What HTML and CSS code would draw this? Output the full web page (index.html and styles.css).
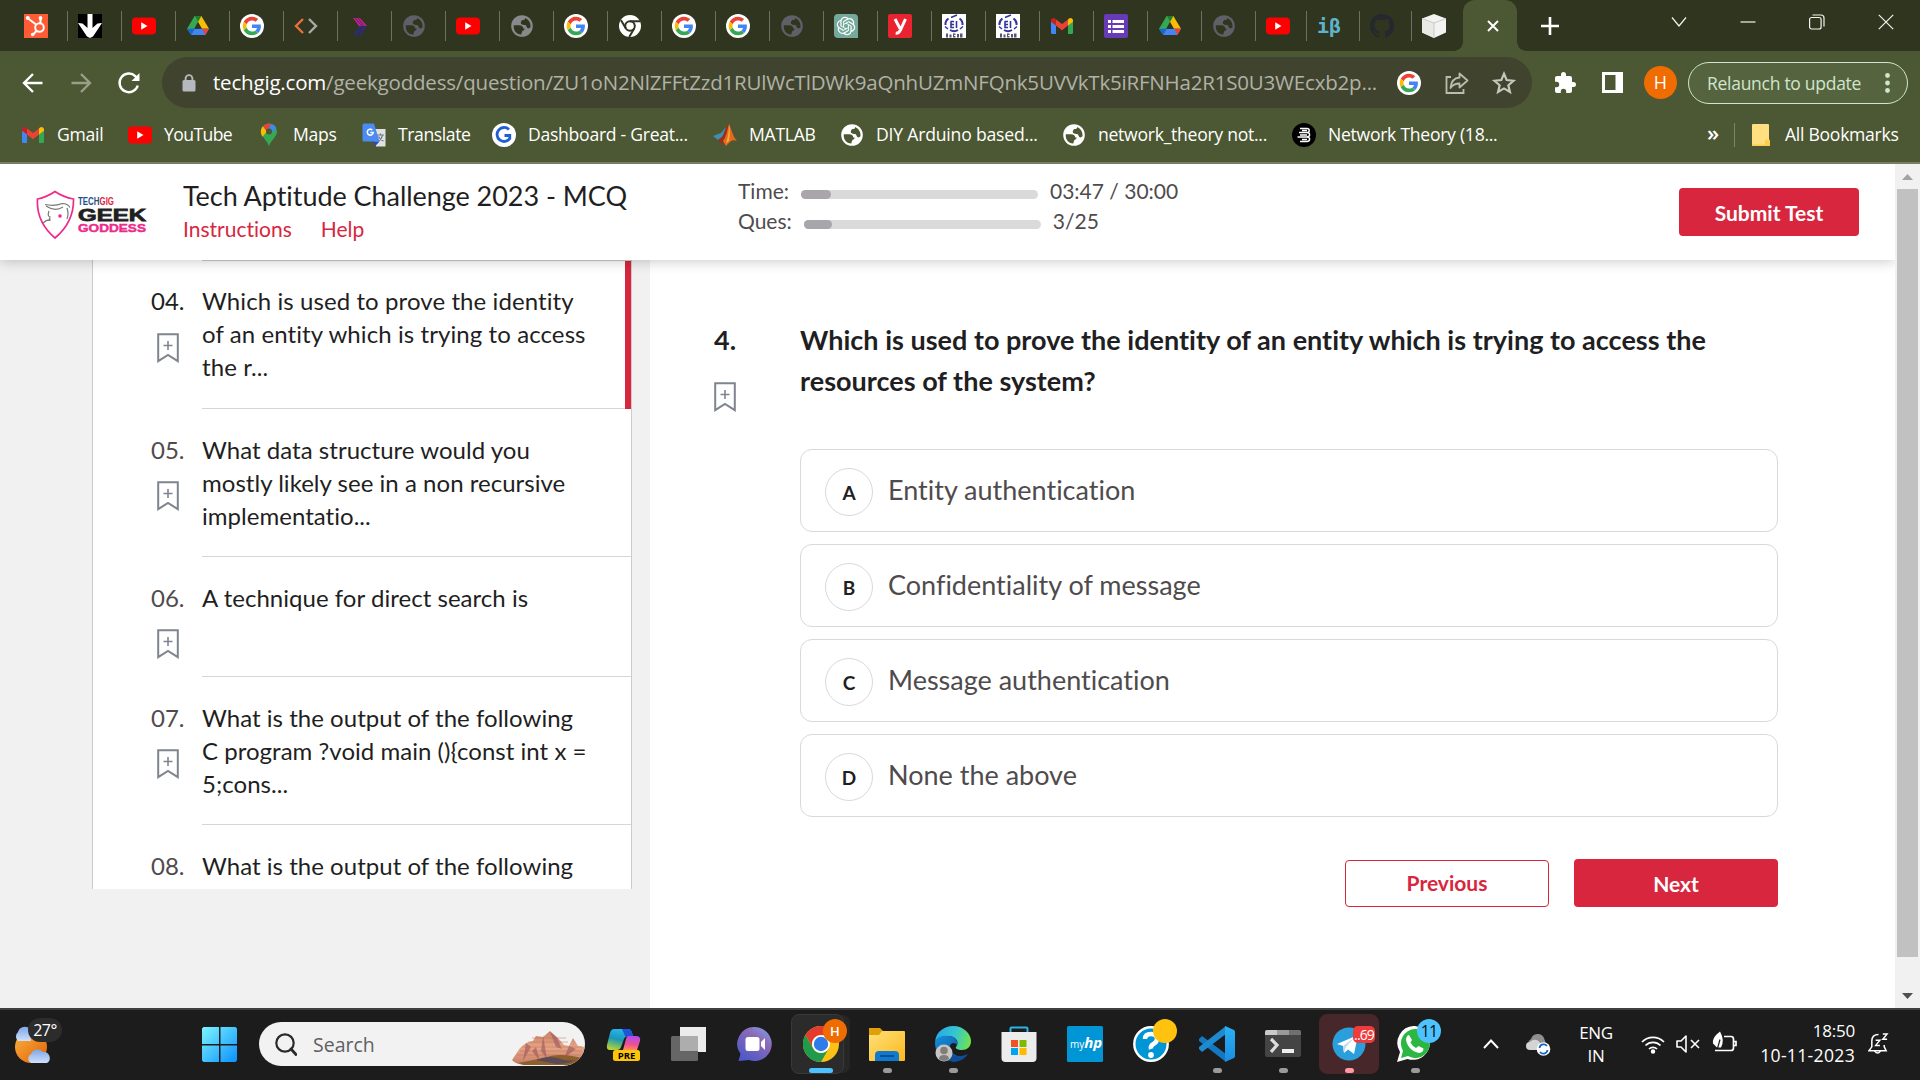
FILE: index.html
```html
<!DOCTYPE html>
<html lang="en">
<head>
<meta charset="utf-8">
<title>Tech Aptitude Challenge 2023 - MCQ</title>
<link rel="stylesheet" href="styles.css">
</head>
<body>
<svg class="defs" width="0" height="0">
  <defs>
    <linearGradient id="gWin" x1="0" y1="0" x2="1" y2="1"><stop offset="0" stop-color="#7df5ff"/><stop offset="1" stop-color="#0a90ff"/></linearGradient>
    <linearGradient id="gCopA" x1="0.6" y1="0" x2="0.3" y2="1"><stop offset="0" stop-color="#28b9f2"/><stop offset=".5" stop-color="#1c97b8"/><stop offset="1" stop-color="#b6d432"/></linearGradient>
    <linearGradient id="gCopB" x1=".5" y1="0" x2=".4" y2="1"><stop offset="0" stop-color="#b04bf0"/><stop offset=".6" stop-color="#ee5191"/><stop offset="1" stop-color="#ff8a5c"/></linearGradient>
    <linearGradient id="gChat" x1="1" y1="0" x2=".3" y2="1"><stop offset="0" stop-color="#7fa8f5"/><stop offset=".4" stop-color="#8b6ab5"/><stop offset="1" stop-color="#5059c9"/></linearGradient>
    <linearGradient id="gFold" x1="0" y1="0" x2="1" y2="1"><stop offset="0" stop-color="#ffe07a"/><stop offset="1" stop-color="#fcb91c"/></linearGradient>
    <linearGradient id="gEdge" x1="0" y1=".3" x2="1" y2=".5"><stop offset="0" stop-color="#2aa7e8"/><stop offset=".55" stop-color="#35c6d0"/><stop offset="1" stop-color="#6fe34e"/></linearGradient>
    <linearGradient id="gEdgeB" x1="0" y1="0" x2="1" y2="1"><stop offset="0" stop-color="#1390dd"/><stop offset="1" stop-color="#0e4f99"/></linearGradient>
    <linearGradient id="gCode" x1="0" y1="0" x2="0" y2="1"><stop offset="0" stop-color="#2bb0f5"/><stop offset="1" stop-color="#1b8ce0"/></linearGradient>
    <linearGradient id="gRock" x1="0" y1="0" x2="0" y2="1"><stop offset="0" stop-color="#c9826a"/><stop offset=".5" stop-color="#e8a584"/><stop offset="1" stop-color="#c47d66"/></linearGradient>
    <linearGradient id="gSun" x1="0" y1="0" x2="1" y2="1"><stop offset="0" stop-color="#fbb33a"/><stop offset="1" stop-color="#e0600b"/></linearGradient>
    <linearGradient id="gCloud" x1="0" y1="0" x2="0" y2="1"><stop offset="0" stop-color="#7ea6e8"/><stop offset="1" stop-color="#cfe0fb"/></linearGradient>

    <symbol id="google" viewBox="0 0 24 24"><circle cx="12" cy="12" r="12" fill="#fff"/><g transform="translate(2.7 2.7) scale(.3875)"><path fill="#EA4335" d="M24 9.5c3.54 0 6.71 1.22 9.21 3.6l6.85-6.85C35.9 2.38 30.47 0 24 0 14.62 0 6.51 5.38 2.56 13.22l7.98 6.19C12.43 13.72 17.74 9.5 24 9.5z"/><path fill="#4285F4" d="M46.98 24.55c0-1.57-.15-3.09-.38-4.55H24v9.02h12.94c-.58 2.96-2.26 5.48-4.78 7.18l7.73 6c4.51-4.18 7.09-10.36 7.09-17.65z"/><path fill="#FBBC05" d="M10.53 28.59c-.48-1.45-.76-2.99-.76-4.59s.27-3.14.76-4.59l-7.98-6.19C.92 16.46 0 20.12 0 24c0 3.88.92 7.54 2.56 10.78l7.97-6.19z"/><path fill="#34A853" d="M24 48c6.48 0 11.93-2.13 15.89-5.81l-7.73-6c-2.15 1.45-4.92 2.3-8.16 2.3-6.26 0-11.57-4.22-13.47-9.91l-7.98 6.19C6.51 42.62 14.62 48 24 48z"/></g></symbol>
    <symbol id="youtube" viewBox="0 0 24 24"><rect y="3.6" width="24" height="16.8" rx="4" fill="#f00"/><path d="M9.2 8.2v7.6l6.3-3.8z" fill="#fff"/></symbol>
    <symbol id="drive" viewBox="0 0 24 24"><path d="M8.6 2h6.800l-3.400 6-6.900 12.600L1 14.800z" fill="#34a853"/><path d="M8.600 2h6.800l7.600 12.800h-7z" fill="#fbbc04"/><path d="M8.500 14.800H23L19.300 21H5z" fill="#4285f4"/><path d="M16 14.800h7L19.300 21z" fill="#ea4335"/><path d="M8.600 2h6.800L12 8z" fill="#188038"/><path d="M1 14.800h7.500L5 21z" fill="#1967d2"/><path d="M12 8.600l3.400 6.200H8.600z" fill="#30351f"/></symbol>
    <symbol id="gmail" viewBox="0 0 24 24"><path d="M1 6v12.500A1.500 1.500 0 0 0 2.500 20H6v-9z" fill="#4285f4"/><path d="M23 6v12.500a1.500 1.500 0 0 1-1.500 1.500H18v-9z" fill="#34a853"/><path d="M6 5.500l6 4.600 6-4.600V11.500l-6 4.700-6-4.700z" fill="#ea4335"/><path d="M1 6.500C1 4 3.500 3.200 5 4.500l1 1v6L1 7.700z" fill="#c5221f"/><path d="M23 6.500c0-2.500-2.500-3.300-4-2l-1 1v6l5-3.800z" fill="#fbbc04"/></symbol>
    <symbol id="globe" viewBox="0 0 24 24"><path fill="currentColor" fill-rule="evenodd" d="M12 1.200a10.800 10.800 0 1 0 0 21.600 10.800 10.800 0 0 0 0-21.600zM3.800 11.200l5.400.1c2.600.2 4 1.200 4 3.200h1.500c-.3 2.400-2.300 2-2.700 3.300l-.7 2.700C6.200 20.600 3.200 16 3.800 11.200zM15 3.900c3.800 1.600 6 5.200 5.500 9.400-1.800 2-3.600 1-4-.8-.3-1.800-1.900-1.500-3.500-1.800-2.600-.5-2.700-2.300-1.300-4.200.8-1 2.800-.3 3.300-1.600z"/></symbol>
    <symbol id="mark" viewBox="0 0 22 30"><path d="M1.200 1.200h19.600v27l-9.800-6.200-9.800 6.200z" fill="none" stroke="#7f858f" stroke-width="2"/><path d="M11 8v9M6.500 12.500h9" stroke="#7f858f" stroke-width="1.600"/></symbol>
    <symbol id="seal" viewBox="0 0 24 24"><path fill="#fff" d="M0 0h24v24H0z"/><g fill="none" stroke="#34349a"><path d="M6.500 4.500Q3 7 3.500 11M17.500 4.500Q21 7 20.500 11M8 16q4 2.500 8 0" stroke-width="2"/><path d="M3 12.500l3 2.500M21 12.500L18 15M9 3.500l6-2.500" stroke-width="1.500"/><path d="M8.500 7.500H12M9 7.500v6h3M9 10.500h3M14.500 7v7" stroke-width="1.600"/></g><path d="M4 19.500h2v4H4zM7.500 20.500h2v3h-2zM11 19.500h2.500v1.500H12v1h1.500v1.500H11zM15 20h2v3.500h-2zM18 19.500h2.500v4H18z" fill="#55557c"/></symbol>
  </defs>
</svg>

<div class="screen">
  <div class="tabstrip">
    <div class="tab"><svg viewBox="0 0 24 24"><path fill="#ff5c35" d="M0 0h24v24H0z"/><g fill="none" stroke="#fff" stroke-width="2"><circle cx="15.500" cy="13.500" r="4.300"/><path d="M3.500 4l8.500 6.500M16.500 9V5M12.500 17L9 20.500"/></g><g fill="#fff"><circle cx="3.800" cy="4" r="2"/><circle cx="16.500" cy="4" r="1.900"/><circle cx="8.700" cy="20.500" r="1.800"/></g></svg></div>
    <div class="tab"><svg viewBox="0 0 24 24"><path d="M0 0h24v24H0z"/><path d="M9.500 0h5v14l5-4.500 4.500-.500-9 13.500-3 1.500-3-1.500L0 9l4.500.500 5 4.500z" fill="#fff"/></svg></div>
    <div class="tab"><svg><use href="#youtube"/></svg></div>
    <div class="tab"><svg><use href="#drive"/></svg></div>
    <div class="tab"><svg><use href="#google"/></svg></div>
    <div class="tab"><svg viewBox="0 0 24 24" fill="none" stroke-width="2.400"><path d="M9 5l-7 7 7 7" stroke="#e8703c"/><path d="M15 5l7 7-7 7" stroke="#a9a9a9"/></svg></div>
    <div class="tab"><svg viewBox="0 0 24 24"><path d="M5 4h7l7 8h-8z" fill="#c6218c"/><path d="M11 12h8l-6 9H5z" fill="#2b2f6e"/><path d="M7 4l7 8-6 9M10 4l6 8-6 9" stroke="#3a2550" fill="none" stroke-width=".8"/></svg></div>
    <div class="tab dim"><svg><use href="#globe"/></svg></div>
    <div class="tab"><svg><use href="#youtube"/></svg></div>
    <div class="tab mid"><svg><use href="#globe"/></svg></div>
    <div class="tab"><svg><use href="#google"/></svg></div>
    <div class="tab"><svg viewBox="0 0 24 24"><circle cx="12" cy="12" r="11" fill="#fff"/><g fill="none" stroke="#30351f" stroke-width="2"><circle cx="12" cy="12" r="4.800"/><path d="M12 7.200h10M7.900 14.500L3 6.200M16.200 14.500l-5 8.500"/></g></svg></div>
    <div class="tab"><svg><use href="#google"/></svg></div>
    <div class="tab"><svg><use href="#google"/></svg></div>
    <div class="tab dim"><svg><use href="#globe"/></svg></div>
    <div class="tab"><svg viewBox="0 0 24 24"><path d="M4 0h16a4 4 0 0 1 4 4v20H4a4 4 0 0 1-4-4V4a4 4 0 0 1 4-4z" fill="#75a99c"/><path transform="translate(2.700 2.700) scale(.775)" fill="#fff" d="M22.282 9.821a5.985 5.985 0 0 0-.516-4.910 6.046 6.046 0 0 0-6.510-2.900A6.065 6.065 0 0 0 4.981 4.182a5.985 5.985 0 0 0-3.998 2.900 6.046 6.046 0 0 0 .743 7.097 5.980 5.980 0 0 0 .511 4.911 6.051 6.051 0 0 0 6.515 2.900A5.985 5.985 0 0 0 13.260 24a6.056 6.056 0 0 0 5.772-4.206 5.990 5.990 0 0 0 3.998-2.900 6.056 6.056 0 0 0-.748-7.073zm-9.022 12.608a4.476 4.476 0 0 1-2.876-1.041l.142-.080 4.778-2.758a.795.795 0 0 0 .393-.681v-6.737l2.020 1.169a.071.071 0 0 1 .038.052v5.583a4.504 4.504 0 0 1-4.495 4.494zm-9.661-4.125a4.471 4.471 0 0 1-.535-3.014l.142.085 4.783 2.758a.771.771 0 0 0 .781 0l5.843-3.369v2.332a.080.080 0 0 1-.033.062L9.740 19.950a4.499 4.499 0 0 1-6.141-1.646zM2.341 7.896a4.485 4.485 0 0 1 2.366-1.973V11.600a.766.766 0 0 0 .388.677l5.814 3.354-2.020 1.169a.076.076 0 0 1-.071 0l-4.830-2.787A4.504 4.504 0 0 1 2.341 7.872zm16.596 3.856L13.104 8.364 15.119 7.200a.076.076 0 0 1 .071 0l4.830 2.791a4.494 4.494 0 0 1-.677 8.104v-5.677a.790.790 0 0 0-.407-.667zm2.011-3.023l-.142-.085-4.774-2.782a.776.776 0 0 0-.785 0L9.409 9.230V6.897a.066.066 0 0 1 .028-.062l4.830-2.787a4.499 4.499 0 0 1 6.680 4.660zM8.307 12.863l-2.020-1.164a.080.080 0 0 1-.038-.057V6.074a4.499 4.499 0 0 1 7.376-3.454l-.142.081L8.704 5.459a.795.795 0 0 0-.393.681zm1.098-2.365l2.602-1.500 2.607 1.500v2.999l-2.597 1.500-2.607-1.500z"/></svg></div>
    <div class="tab"><svg viewBox="0 0 24 24"><rect width="24" height="24" rx="2" fill="#ea2330"/><path d="M7 5l5 9.500M17.500 5l-5 11c-1 2.300-2.300 3.500-4.800 3.300" fill="none" stroke="#fff" stroke-width="3"/></svg></div>
    <div class="tab"><svg><use href="#seal"/></svg></div>
    <div class="tab"><svg><use href="#seal"/></svg></div>
    <div class="tab"><svg><use href="#gmail"/></svg></div>
    <div class="tab"><svg viewBox="0 0 24 24"><rect width="24" height="24" rx="2" fill="#673ab7"/><path d="M8.500 6H20v3H8.500zM8.500 11H20v3H8.500zM8.500 16H20v3H8.500zM4 6h3v3H4zM4 11h3v3H4zM4 16h3v3H4z" fill="#fff"/></svg></div>
    <div class="tab"><svg><use href="#drive"/></svg></div>
    <div class="tab dim"><svg><use href="#globe"/></svg></div>
    <div class="tab tab-51"><svg><use href="#youtube"/></svg></div>
    <div class="tab tab-53"><span class="ib">iβ</span></div>
    <div class="tab tab-52"><svg viewBox="0 0 16 16" fill="#24292f"><path d="M8 0C3.580 0 0 3.580 0 8c0 3.540 2.290 6.530 5.470 7.590.4.070.55-.17.55-.38v-1.340c-2.230.48-2.700-1.070-2.700-1.070-.36-.93-.89-1.170-.89-1.170-.73-.5.06-.49.06-.49.8.06 1.230.83 1.230.83.71 1.230 1.880.87 2.330.67.070-.52.280-.87.5-1.070-1.780-.2-3.640-.89-3.640-3.950 0-.87.310-1.590.82-2.150-.08-.2-.36-1.020.08-2.120 0 0 .67-.21 2.200.82a7.600 7.600 0 0 1 4 0c1.530-1.040 2.200-.82 2.200-.82.44 1.100.16 1.920.08 2.120.51.56.82 1.270.82 2.150 0 3.070-1.870 3.750-3.650 3.950.29.25.54.73.54 1.480v2.200c0 .21.150.46.55.38A8 8 0 0 0 8 0z"/></svg></div>
    <div class="tab tab-51 last"><svg viewBox="0 0 24 24"><path d="M12 0l12 4.500v14L12 24 0 18.500v-14z" fill="#f3f3f1"/><path d="M12 9v15L0 18.500v-14z" fill="#e9e9e6"/><path d="M0 4.500L12 9l12-4.500M12 9v15" stroke="#c9c9c5" fill="none"/></svg></div>
    <div class="tab-active"><svg viewBox="0 0 12 12"><path d="M1 1l10 10M11 1L1 11" stroke="#fff" stroke-width="2"/></svg></div>
    <svg class="plus" viewBox="0 0 18 18"><path d="M9 0v18M0 9h18" stroke="#fff" stroke-width="2.600"/></svg>
    <div class="winctl">
      <svg viewBox="0 0 16 16"><path d="M1 3.500L8 12l7-8.500"/></svg>
      <svg viewBox="0 0 16 16"><path d="M.5 8h15"/></svg>
      <svg viewBox="0 0 16 16"><rect x=".6" y="3.500" width="11.500" height="11.500" rx="2"/><path d="M3.500 1h8.500a3 3 0 0 1 3 3v8.500"/></svg>
      <svg viewBox="0 0 16 16"><path d="M.8.8l14.400 14.400M15.200.8L.8 15.200"/></svg>
    </div>
  </div>

  <div class="toolbar">
    <svg class="nav" viewBox="0 0 24 24"><path d="M21.500 12H3.500M12 3l-9 9 9 9"/></svg>
    <svg class="nav off" viewBox="0 0 24 24"><path d="M2.500 12h18M12 3l9 9-9 9"/></svg>
    <svg class="nav" viewBox="0 0 24 24"><path d="M20.800 14.500A9.300 9.300 0 1 1 18.500 5.300L21 8"/><path d="M22.500 2v8h-8z" fill="#fff" stroke="none"/></svg>
    <div class="omnibox">
      <svg class="lock" viewBox="0 0 14 18"><rect x=".5" y="6" width="13" height="11.500" rx="1.500" fill="#b5b8bd"/><path d="M3.600 7V4.500a3.400 3.400 0 0 1 6.800 0V7" fill="none" stroke="#b5b8bd" stroke-width="1.900"/></svg>
      <span class="url"><b>techgig.com</b>/geekgoddess/question/ZU1oN2NlZFFtZzd1RUlWcTlDWk9aQnhUZmNFQnk5UVVkTk5iRFNHa2R1S0U3WEcxb2p...</span>
      <svg class="gicon"><use href="#google"/></svg>
      <svg class="share" viewBox="0 0 24 24" fill="none" stroke="#b9bcae" stroke-width="1.800"><path d="M6 6H1.500v16h17v-4"/><path d="M14.500 2.500l8 7-8 7v-4c-4.500 0-7 1.500-9 4.500.5-6 3.500-10 9-10.500z" stroke-linejoin="round"/></svg>
      <svg class="star" viewBox="0 0 24 24" fill="none" stroke="#c6c8bd" stroke-width="2"><path d="M12 3.500l2.500 5.800 6.300.6-4.800 4.200 1.500 6.200-5.500-3.300-5.500 3.300L8 14.100 3.200 9.900l6.300-.6z"/></svg>
    </div>
    <svg class="puzzle" viewBox="0 0 24 24"><path fill="#fff" d="M20.500 11H19V7c0-1.100-.9-2-2-2h-4V3.500a2.500 2.500 0 0 0-5 0V5H4c-1.100 0-2 .9-2 2v3.800h1.500a2.700 2.700 0 0 1 0 5.400H2V20c0 1.100.9 2 2 2h3.800v-1.500a2.700 2.700 0 0 1 5.400 0V22H17c1.100 0 2-.9 2-2v-4h1.500a2.500 2.500 0 0 0 0-5z"/></svg>
    <svg class="panel" viewBox="0 0 21 21"><path fill="#fff" fill-rule="evenodd" d="M0 0h21v21H0zM3 3v15h10.500V3z"/></svg>
    <div class="avatar">H</div>
    <div class="relaunch"><span>Relaunch to update</span><svg viewBox="0 0 5 20" fill="#cfe6cd"><circle cx="2.500" cy="2.500" r="2.400"/><circle cx="2.500" cy="10" r="2.400"/><circle cx="2.500" cy="17.500" r="2.400"/></svg></div>
  </div>

  <div class="bookmarks">
    <div class="bm w1"><svg><use href="#gmail"/></svg><span>Gmail</span></div>
    <div class="bm w2"><svg><use href="#youtube"/></svg><span>YouTube</span></div>
    <div class="bm w3"><svg viewBox="0 0 24 24"><path d="M12 .5a8 8 0 0 0-8 8c0 5.500 6 8 8 15 2-7 8-9.500 8-15a8 8 0 0 0-8-8z" fill="#34a853"/><path d="M6 3.200l4 5.300-4.500 5.200C3 10 3.500 6 6 3.200z" fill="#fbbc04"/><path d="M6 3.200A8 8 0 0 1 14.500.9L9.500 8z" fill="#ea4335"/><path d="M14.500.9A8 8 0 0 1 19.200 5L14 10.500 10 8z" fill="#4285f4"/><circle cx="12" cy="8.500" r="3" fill="#4c5733"/></svg><span>Maps</span></div>
    <div class="bm w4"><svg viewBox="0 0 24 24"><path d="M9 6h14.500v17.500H14z" fill="#dfe1e3"/><path d="M2 .5h10l5.500 18H2A1.500 1.500 0 0 1 .5 17V2A1.500 1.500 0 0 1 2 .5z" fill="#4b8bf4"/><path d="M11.500 18.500h6l-4.300 4.700z" fill="#2a48b8"/><path d="M8.300 9.500h3a3 3 0 1 1-1-2.600" fill="none" stroke="#fff" stroke-width="1.500"/><path d="M15 12h7M18.500 10.500V12M20.500 12c-.5 3-2 4.800-4 6M16.500 13.500c1 2 2.500 3.500 5 4.500" fill="none" stroke="#6c7a89" stroke-width="1.200"/></svg><span>Translate</span></div>
    <div class="bm w5"><svg viewBox="0 0 24 24"><circle cx="12" cy="12" r="12" fill="#fff"/><path d="M17 6.500a7 7 0 1 0 .8 9V12.500H12.500" fill="none" stroke="#1f5fd0" stroke-width="2.800"/></svg><span>Dashboard - Great...</span></div>
    <div class="bm w6"><svg viewBox="0 0 24 24"><path d="M0 13l8-3 5-6-3 9-5 4z" fill="#3f8fae"/><path d="M5 17l4-2c2-4 4-11 7-14-1 8-3 14-7 20z" fill="#a3291a"/><path d="M16 1c2 4 4 13 8 17-5-2-6 0-11 5l-3-5c3-4 4-10 6-17z" fill="#e66a1c"/><path d="M16 1c1 5 1 10 0 17l-3 2c2-5 3-12 3-19z" fill="#f9b13c"/></svg><span>MATLAB</span></div>
    <div class="bm w7"><svg><use href="#globe"/></svg><span>DIY Arduino based...</span></div>
    <div class="bm w8"><svg><use href="#globe"/></svg><span>network_theory not...</span></div>
    <div class="bm w9"><svg viewBox="0 0 24 24"><circle cx="12" cy="12" r="12"/><path d="M8 5.500h7c3 0 3 4 0 4H7M15 9.500c4 .5 3 4.500 0 4.500H5.500M15 14c4 .5 3 4.500 0 4.500H8M10 7.500h5M8 12h7M10 16.500h5" fill="none" stroke="#fff" stroke-width="1.400"/></svg><span>Network Theory (18...</span></div>
    <div class="more">»</div>
    <div class="vsep"></div>
    <svg class="folder" viewBox="0 0 18 22"><path d="M1 0h15a1 1 0 0 1 1 1v14l1 2v4a1 1 0 0 1-1 1H1a1 1 0 0 1-1-1V1a1 1 0 0 1 1-1z" fill="#ffdf80"/><path d="M0 20.500h13V16q2-1.500 5 1v5H0z" fill="#fbcf4c"/></svg>
    <span class="all">All Bookmarks</span>
  </div>

  <div class="page">
    <div class="doc">
      <header class="head">
        <svg class="logo" viewBox="0 0 112 50">
          <path d="M1.500 9Q11 7 19 1.500 27 7 37.500 9 38 32 19 48 0 32 1.500 9z" fill="#fff" stroke="#ee2a8b" stroke-width="1.700"/>
          <path d="M9 14.500q10 2 17-1 6 0 8 4M10 16q9 6 17 1M13 21q-2 5 1 6l-1 4M7 33q4-4 8-3M31 18q2 6 0 11" fill="none" stroke="#777" stroke-width="1.200"/><circle cx="24" cy="26" r="1.800" fill="#ee2a8b"/>
          <text x="42" y="14.500" class="lg1" textLength="36" lengthAdjust="spacingAndGlyphs" fill="#234f8f">TECH<tspan fill="#e3263a">GIG</tspan></text>
          <text x="42" y="31" class="lg2" textLength="68" lengthAdjust="spacingAndGlyphs">GEEK</text>
          <text x="42" y="42" class="lg3" textLength="68" lengthAdjust="spacingAndGlyphs">GODDESS</text>
        </svg>
        <div class="titles"><h1>Tech Aptitude Challenge 2023 - MCQ</h1><nav><a>Instructions</a><a>Help</a></nav></div>
        <div class="meters">
          <div class="meter"><span>Time:</span><i class="bar b1"><em></em></i><span>03:47 / 30:00</span></div>
          <div class="meter"><span>Ques:</span><i class="bar b2"><em></em></i><span>3/25</span></div>
        </div>
        <button class="btn submit">Submit Test</button>
      </header>
      <div class="body">
        <aside class="list">
          <div class="q current"><div class="no"><span>04.</span><svg><use href="#mark"/></svg></div><p>Which is used to prove the identity<br>of an entity which is trying to access<br>the r...</p></div>
          <div class="q"><div class="no"><span>05.</span><svg><use href="#mark"/></svg></div><p>What data structure would you<br>mostly likely see in a non recursive<br>implementatio...</p></div>
          <div class="q"><div class="no"><span>06.</span><svg><use href="#mark"/></svg></div><p>A technique for direct search is</p></div>
          <div class="q"><div class="no"><span>07.</span><svg><use href="#mark"/></svg></div><p>What is the output of the following<br>C program ?void main (){const int x =<br>5;cons...</p></div>
          <div class="q"><div class="no"><span>08.</span></div><p>What is the output of the following</p></div>
        </aside>
        <main class="main">
          <div class="qnum"><span>4.</span><svg><use href="#mark"/></svg></div>
          <div class="qbody">
            <h2>Which is used to prove the identity of an entity which is trying to access the<br>resources of the system?</h2>
            <div class="opts">
              <div class="opt"><b>A</b><span>Entity authentication</span></div>
              <div class="opt"><b>B</b><span>Confidentiality of message</span></div>
              <div class="opt"><b>C</b><span>Message authentication</span></div>
              <div class="opt"><b>D</b><span>None the above</span></div>
            </div>
            <div class="actions"><button class="btn prev">Previous</button><button class="btn next">Next</button></div>
          </div>
        </main>
      </div>
    </div>
    <div class="scroll"><svg class="up" viewBox="0 0 11 6"><path d="M0 6L5.500 0 11 6z" fill="#a3a3a3"/></svg><div class="thumb"></div><svg class="down" viewBox="0 0 11 6"><path d="M0 0l5.500 6L11 0z" fill="#505050"/></svg></div>
  </div>

  <div class="taskbar">
    <div class="weather"><svg viewBox="0 0 40 42"><circle cx="19" cy="24" r="16" fill="url(#gSun)"/><path d="M6 18a6 6 0 0 1 0-9 7 7 0 0 1 12-3l1 12z" fill="url(#gCloud)"/><path d="M19 40a5 5 0 0 1 0-9 7 7 0 0 1 12-2 6 6 0 0 1 4 11z" fill="url(#gCloud)"/></svg><span>27°</span></div>
    <svg class="start" viewBox="0 0 35 35"><path fill="url(#gWin)" d="M1.500 0H17v17H0V1.500zM18.500 0h15L35 1.500V17H18.500zM0 18.500h17V35H1.500L0 33.500zM18.500 18.500H35v15L33.500 35h-15z"/></svg>
    <div class="search"><svg class="mag" viewBox="0 0 22 23" fill="none" stroke="#2a2a2a"><circle cx="10" cy="10" r="8.700" stroke-width="2.200"/><path d="M16 16l5 5.500" stroke-width="2.800" stroke-linecap="round"/></svg><span>Search</span>
      <svg class="rock" viewBox="0 0 73 34"><path d="M0 29L8 17l6-5 7-2 3-5 7 1 7-6 8 7 6 7 5 1 4-8 5 8 7 1-1 6q-4 8-14 12H12Q3 33 0 29z" fill="url(#gRock)"/><path d="M14 12l-3 18 8-14zM31 6l-2 14 6 8-4-24zM38 1l6 15 6 2-5-11zM24 16l4 14-8-10zM57 15l-5 12 12-9z" fill="#8c4f5c" opacity=".55"/><path d="M20 7h34M16 11h40M10 16h60M8 20h62M5 24h64" stroke="#b96a5c" stroke-width=".8" opacity=".6"/><path d="M6 32q20-4 26-5 14-6 38 0-5 5-14 7H12z" fill="#8d5f2c"/><path d="M24 29q14-6 28 0 8 1 12 0-8 4-20 4z" fill="#5b4a55"/></svg></div>
    <div class="apps">
      <div class="app"><svg viewBox="0 0 36 36"><path d="M9 3h14q3 0 4 4l1 3h-5q-3 0-4 3l-3 8q-1 3-4 3H5q-4 0-3-5L5 7q1-4 4-4z" fill="url(#gCopA)"/><path d="M17 3h6q3 0 4 4l1 3h-8z" fill="#1f55d8"/><path d="M23 10h8q5 0 4 5l-3 9H18l3-11q.500-3 2-3z" fill="url(#gCopB)"/><rect x="8" y="24" width="27" height="11" rx="2.500" fill="#fec40a"/><text x="21.500" y="33" class="pre" text-anchor="middle">PRE</text></svg></div>
      <div class="app"><svg viewBox="0 0 36 36"><path d="M9 1h26v25H9z" fill="#ececec"/><rect y="10" width="27" height="25" rx="1.500" fill="#666"/><path d="M9 10h18v15H9z" fill="#adadad"/></svg></div>
      <div class="app"><svg viewBox="0 0 36 36"><path d="M18 1a17 17 0 1 1-6 33l-10.500 1 2-7A17 17 0 0 1 18 1z" fill="url(#gChat)"/><rect x="8.500" y="11" width="14" height="14" rx="2.500" fill="#fff"/><path d="M24 16l4-4v12l-4-4z" fill="#fff"/></svg></div>
      <div class="app"><span class="tile"></span><svg viewBox="0 0 36 36"><circle cx="18" cy="18" r="18" fill="#fbc116"/><path d="M2.400 9A18 18 0 0 1 33.600 9H18a9 9 0 0 0-8.500 12z" fill="#e33b2e"/><path d="M2.400 9A18 18 0 0 0 18 36l7.800-13.500A9 9 0 0 1 10.200 22.500z" fill="#229a4c"/><circle cx="18" cy="18" r="9" fill="#fff"/><circle cx="18" cy="18" r="7.200" fill="#2f7bea"/></svg><span class="badge bh">H</span><span class="dot wide"></span></div>
      <div class="app"><svg viewBox="0 0 36 36"><path d="M0 2h11l4 4v6H0z" fill="#e0a008"/><path d="M13 5h22q1 0 1 1v28q0 1-1 1H1q-1 0-1-1V9h10z" fill="url(#gFold)"/><path d="M6 35V29q0-4 4-4h16q4 0 4 4v6z" fill="#0f7ad0"/><path d="M11 30h14" stroke="#0a4e93" stroke-width="2"/></svg><span class="dot"></span></div>
      <div class="app"><svg viewBox="0 0 36 36"><path d="M0 16C1 5 10 0 18 0c11 0 18 8 18 15 0 6-4 9-9 9-5 0-7-2-6-3 4-5 0-11-8-11C7 10 2 12 0 16z" fill="url(#gEdge)"/><path d="M0 16c2-5 8-7 13-6 7 0 10 5 9 9-1-2-4-3-6-1-5 6 4 14 14 12-4 4-9 6-14 5C5 35 0 26 0 16z" fill="url(#gEdgeB)"/><path d="M13 18c-2 8 5 15 17 11l3-1c-3 5-9 8-15 8-8-2-11-10-5-18z" fill="#0f4d98"/><circle cx="9" cy="27" r="8.500" fill="#c8c6c4"/><circle cx="9" cy="24.500" r="3.800" fill="#807d7a"/><path d="M4 33q0-4 5-4t5 4q-5 4-10 0z" fill="#807d7a"/></svg><span class="dot"></span></div>
      <div class="app"><svg viewBox="0 0 36 36"><path d="M9.500 8V2.500q0-1 1-1h15q1 0 1 1V8" fill="none" stroke="#28b3ea" stroke-width="2"/><path d="M.5 6h35v26q0 4-4 4h-27q-4 0-4-4z" fill="#ececec"/><path d="M10 14h7v7h-7z" fill="#f25022"/><path d="M18.500 14h7v7h-7z" fill="#7fba00"/><path d="M10 22h7v7h-7z" fill="#00a4ef"/><path d="M18.500 22h7v7h-7z" fill="#ffb900"/></svg></div>
      <div class="app"><svg viewBox="0 0 36 36"><rect width="36" height="36" rx="1.500" fill="#0096d6"/><text x="3" y="22" class="my">my<tspan class="hp">hp</tspan></text></svg></div>
      <div class="app"><svg viewBox="0 0 36 36"><circle cx="18" cy="18" r="16.700" fill="#0096d6" stroke="#fff" stroke-width="2.400"/><path d="M12 13q0-5 6-5t6 5q0 3-3.500 5T18 23" fill="none" stroke="#fff" stroke-width="4.500"/><circle cx="18" cy="29" r="2.900" fill="#fff"/></svg><span class="badge by"></span></div>
      <div class="app"><svg viewBox="0 0 36 36"><path d="M0 13l3-3 24 18v8L0 15z" fill="#1478c0"/><path d="M0 23l3 3L27 8V0L0 21z" fill="#1e8ad0"/><path d="M26 0l9 4q1 .5 1 2v24q0 1.500-1 2l-9 4z" fill="url(#gCode)"/></svg><span class="dot"></span></div>
      <div class="app"><svg viewBox="0 0 36 36"><rect y="4" width="36" height="27" rx="2" fill="#444"/><path d="M2 4h10v5H0V6q0-2 2-2z" fill="#c9c9c9"/><path d="M12 4h12v5H12z" fill="#9a9a9a"/><path d="M24 4h10q2 0 2 2v3H24z" fill="#707070"/><path d="M6 13l6 6-6 7" fill="none" stroke="#ddd" stroke-width="3.200"/><path d="M17 23h12v4H17z" fill="#eee"/></svg><span class="dot"></span></div>
      <div class="app"><span class="tile red"></span><svg viewBox="0 0 36 36"><circle cx="18" cy="18" r="16.500" fill="#2a9fdb"/><path d="M6 18L27 9l-4 19-6-4.500-4 3.500-1-7z" fill="#fff"/><path d="M12 20l11-8-8 9-2 6z" fill="#c1dcec"/></svg><span class="badge bt">..69</span><span class="dot pink"></span></div>
      <div class="app"><svg viewBox="0 0 36 36"><path d="M18 0a17 17 0 1 1-7.500 33L0 36l3-10A17 17 0 0 1 18 0z" fill="#fff"/><path d="M18 3a14.500 14.500 0 1 1-7 27l-7 2 2-7A14.500 14.500 0 0 1 18 3z" fill="#2cb742"/><path d="M12 9l3 5-1.500 2.500q2 4 5.500 5.500l2.500-2 5 2.500q0 4-4.500 4.500C15 26 9 19 9 13q1-4 3-4z" fill="#fff"/></svg><span class="badge bw">11</span><span class="dot"></span></div>
    </div>
    <div class="tray">
      <svg class="chev" viewBox="0 0 16 10"><path d="M1 9l7-7.500L15 9" fill="none" stroke="#fff" stroke-width="2"/></svg>
      <svg class="cloud" viewBox="0 0 25 22"><path d="M5 14a5 5 0 0 1 0-9A7 7 0 0 1 18 4l3 9z" fill="#8f8f8f"/><path d="M4 16a4 4 0 0 1 0-8 6 6 0 0 1 10 1l3 7z" fill="#d4d4d4"/><circle cx="17.500" cy="15" r="6.800" fill="#fff"/><path d="M13.500 14a4.200 4.200 0 0 1 7.500-2M21.500 16a4.200 4.200 0 0 1-7.500 2" fill="none" stroke="#1467c4" stroke-width="1.800"/></svg>
      <div class="lang"><span>ENG</span><span>IN</span></div>
      <svg class="wifi" viewBox="0 0 24 20" fill="none" stroke="#fff" stroke-width="1.700"><path d="M1 8a15.500 15.500 0 0 1 22 0M4.500 11.500a10.600 10.600 0 0 1 15 0M8 15a5.700 5.700 0 0 1 8 0"/><circle cx="12" cy="17.500" r="1.400" fill="#fff"/></svg>
      <svg class="mute" viewBox="0 0 24 20" fill="none" stroke="#fff" stroke-width="1.600"><path d="M1 7v6h4l5 5V2L5 7z" stroke-linejoin="round"/><path d="M15 6l8 8M23 6l-8 8"/></svg>
      <svg class="batt" viewBox="0 0 25 21" fill="none" stroke="#fff" stroke-width="1.700"><path d="M12 5h7q2.500 0 2.500 2.500v9q0 2.500-2.500 2.500H3M22 10h2v4h-2"/><path d="M8 0q-8 6-7 12l4 4h4q4-7-1-16z" fill="#fff" stroke="none"/><path d="M8 8L5.500 17" stroke="#1c1c1c" stroke-width="1.200"/></svg>
      <div class="clock"><span>18:50</span><span class="date">10-11-2023</span></div>
      <svg class="bell" viewBox="0 0 22 23" fill="none" stroke="#fff" stroke-width="1.600"><path d="M11 2q-7 0-7 7v6l-3 4h18l-2-4v-2M7 19.500q3 4 6 0"/><path d="M8 8h4.500L8 13.500h4.500M15.500 1.500H20l-4.500 5.500H20" stroke-width="1.500"/></svg>
    </div>
  </div>
</div>
</body>
</html>
```
FILE: styles.css
```css
* { box-sizing: border-box; }
body { margin: 0; overflow: hidden; font-family: Lato, sans-serif; font-variant-ligatures: none; }
.defs { position: absolute; }
.screen { width: 1920px; height: 1080px; display: flex; flex-direction: column; background: #fff; }
h1, h2, p { margin: 0; font-weight: 400; }

/* tab strip */
.tabstrip { height: 51px; flex: none; display: flex; padding-left: 14px; background: #30351f; align-items: center; }
.tab { width: 54px; height: 30px; flex: none; display: flex; align-items: center; padding-left: 10px; border-right: 1px solid #6d705f; }
.tab svg { width: 24px; height: 24px; }
.tab-51 { width: 51px; }
.tab-52 { width: 52px; }
.tab-53 { width: 53px; }
.tab.last { border: 0; }
.dim { color: #5d6066; }
.mid { color: #87898b; }
.ib { font: 700 20px/24px "DejaVu Sans Mono", monospace; color: #5fb3cc; }
.tab-active { width: 54px; height: 51px; flex: none; border-radius: 12px 12px 0 0; background: #4c5733; display: flex; align-items: center; justify-content: center; padding-left: 5px; position: relative; }
.tab-active::before, .tab-active::after { content: ""; position: absolute; bottom: 0; width: 9px; height: 9px; }
.tab-active::before { left: -9px; background: radial-gradient(circle at 0 0, transparent 8.5px, #4c5733 9px); }
.tab-active::after { right: -9px; background: radial-gradient(circle at 100% 0, transparent 8.5px, #4c5733 9px); }
.tab-active svg { width: 12px; height: 12px; }
.plus { width: 18px; height: 18px; margin-left: 24px; }
.winctl { margin-left: auto; display: flex; gap: 53px; padding: 0 26px 8px 0; }
.winctl svg { width: 16px; height: 16px; fill: none; stroke: #f4f4f0; stroke-width: 1.2; }

/* toolbar */
.toolbar { height: 61px; flex: none; background: #4c5733; display: flex; align-items: center; padding-left: 21px; padding-top: 2px; font-family: "Open Sans", sans-serif; }
.nav { width: 24px; height: 24px; margin-right: 24px; fill: none; stroke: #fff; stroke-width: 2.4; }
.nav.off { stroke: #999f89; }
.omnibox { width: 1370px; height: 51px; border-radius: 26px; background: #40442f; margin-left: -3px; display: flex; align-items: center; padding-left: 20px; flex: none; }
.lock { width: 14px; height: 18px; }
.url { width: 1178px; margin: -2px 0 0 17px; color: #b0b2a6; font-size: 20.5px; white-space: nowrap; letter-spacing: -.19px; }
.url b { font-weight: 400; color: #fff; }
.gicon { width: 24px; height: 24px; margin-left: 6px; }
.share { width: 24px; height: 24px; margin-left: 24px; }
.star { width: 26px; height: 26px; margin-left: 22px; }
.puzzle { width: 24px; height: 24px; margin-left: 21px; flex: none; }
.panel { width: 21px; height: 21px; margin-left: 25px; flex: none; }
.avatar { width: 33px; height: 33px; margin-left: 21px; border-radius: 50%; background: #ef6c00; color: #fff; font-size: 18px; line-height: 33px; text-align: center; flex: none; }
.relaunch { width: 220px; height: 42px; margin-left: 11px; flex: none; border: 1.5px solid #cfe6cd; border-radius: 21px; background: #56633f; color: #cfe6cd; display: flex; align-items: center; justify-content: space-between; padding: 0 17px 0 18px; font-size: 17.5px; letter-spacing: -.28px; white-space: nowrap; }
.relaunch svg { width: 5px; height: 20px; }

/* bookmarks */
.bookmarks { height: 52px; flex: none; background: #4c5733; border-bottom: 2px solid #7a7d64; display: flex; align-items: center; padding: 0 0 5px 21px; color: #fff; font: 17.6px "Open Sans", sans-serif; letter-spacing: -.28px; white-space: nowrap; }
.bm { display: flex; align-items: center; gap: 12px; flex: none; }
.bm svg { width: 24px; height: 24px; }
.bm span, .all { margin-top: -1px; }
.w1 { width: 107px; }
.w2 { width: 129px; letter-spacing: -.6px; }
.w3 { width: 105px; }
.w4 { width: 130px; letter-spacing: -.4px; }
.w5 { width: 221px; }
.w6 { width: 127px; }
.w7 { width: 222px; letter-spacing: -.2px; }
.w8 { width: 230px; }
.w9 { width: 415px; }
.more { width: 27px; font-size: 22px; font-weight: 600; line-height: 20px; padding-bottom: 5px; }
.vsep { width: 1px; height: 24px; background: #7e8368; margin-right: 17px; }
.folder { width: 18px; height: 22px; margin-right: 15px; }

/* page */
.page { height: 844px; flex: none; display: flex; }
.doc { width: 1895px; display: flex; flex-direction: column; background: #f1f1f1; overflow: hidden; }
.head { height: 96px; flex: none; background: #fff; display: flex; align-items: flex-start; padding-left: 36px; box-shadow: 0 2px 12px rgba(0,0,0,.2); position: relative; z-index: 1; }
.logo { width: 112px; height: 50px; margin-top: 26px; }
.lg1 { font: 700 10px "Liberation Sans", sans-serif; }
.lg2 { font: 700 17px "Liberation Sans", sans-serif; fill: #1f1f23; stroke: #1f1f23; stroke-width: .8px; }
.lg3 { font: 700 10px "Liberation Sans", sans-serif; fill: #ee2a8b; stroke: #ee2a8b; stroke-width: .4px; }
.titles { width: 555px; margin-left: 35px; padding-top: 15px; }
.titles h1 { font-size: 27px; line-height: 34px; color: #1f1f23; white-space: nowrap; letter-spacing: -.05px; }
.titles nav { display: flex; gap: 29px; font-size: 21px; line-height: 31px; color: #d8263e; }
.meters { padding-top: 11px; width: 941px; color: #4f4b4d; font-size: 21px; }
.meter { height: 30px; display: flex; align-items: center; white-space: nowrap; }
.bar { display: block; width: 237px; height: 9px; border-radius: 5px; background: #dadada; margin: 8px 12px 0 12px; }
.bar em { display: block; height: 9px; border-radius: 5px; background: #a8a5ab; }
.b1 em { width: 30px; }
.b2 em { width: 28px; }
.btn { font: 700 21px Lato, sans-serif; border-radius: 4px; border: 0; background: #d8263e; color: #fff; padding: 1px 0 0; height: 48px; }
.submit { width: 180px; margin-top: 24px; }
.body { flex: 1; display: flex; padding-left: 92px; align-items: flex-start; }
.list { width: 540px; height: 629px; overflow: hidden; background: #fff; border: solid #ccc; border-width: 0 1px; font-size: 24px; line-height: 33px; color: #1f1f23; }
.list::before { content: ""; display: block; height: 1px; margin-left: 109px; background: #ccc; }
.q { display: flex; padding-left: 58px; position: relative; }
.no { width: 51px; padding-top: 24px; color: #4f4b4d; }
.no span, .no svg { display: block; }
.no svg { width: 22px; height: 30px; margin: 15px 0 0 6px; }
.q p { flex: 1; min-height: 120px; padding: 24px 0; border-bottom: 1px solid #d6d6d6; white-space: nowrap; letter-spacing: .03px; }
.current .no { color: #1f1f23; padding-top: 23px; }
.current .no svg { margin-top: 16px; }
.current p { padding: 23px 0 25px; letter-spacing: .09px; }
.current::after { content: ""; position: absolute; right: 0; top: 0; width: 6px; height: 148px; background: #d8263e; }
.main { width: 1245px; height: 748px; margin-left: 18px; background: #fff; display: flex; padding: 59px 0 0 64px; color: #1f1f23; font-size: 27px; line-height: 41px; }
.qnum { width: 86px; font-weight: 700; }
.qnum span, .qnum svg { display: block; }
.qnum svg { width: 22px; height: 30px; margin-top: 22px; }
.qbody { width: 978px; }
h2 { font-weight: 700; font-size: 27px; white-space: nowrap; letter-spacing: .015px; }
.opts { display: flex; flex-direction: column; gap: 12px; margin-top: 48px; }
.opt { height: 83px; border: 1px solid #d9d9d9; border-radius: 12px; display: flex; align-items: center; padding-left: 24px; color: #4f4b4d; }
.opt b { width: 48px; height: 48px; border: 1px solid #d9d9d9; border-radius: 50%; font-size: 19px; line-height: 48px; text-align: center; color: #1f1f23; margin: 3px 15px 0 0; }
.opt span { padding-bottom: 2px; }
.actions { display: flex; gap: 25px; justify-content: flex-end; margin-top: 42px; }
.prev, .next { width: 204px; }
.prev { background: #fff; border: 1px solid #d8263e; color: #d8263e; height: 47px; margin-top: 1px; padding: 0 0 3px; }
.next { padding-top: 0; }
.scroll { width: 25px; background: #f1f1f1; display: flex; flex-direction: column; align-items: center; padding-top: 10px; }
.up, .down { width: 11px; height: 6px; }
.thumb { width: 21px; height: 768px; background: #c1c1c1; margin: 9px 0 36px; }

/* taskbar */
.taskbar { height: 72px; flex: none; background: #1c1c1c; border-top: 2px solid #404040; display: flex; align-items: flex-start; padding-left: 12px; font-family: "Open Sans", sans-serif; color: #fff; }
.weather { width: 190px; height: 70px; position: relative; padding-top: 13px; }
.weather svg { width: 40px; height: 42px; }
.weather span { position: absolute; left: 16px; top: 8px; width: 34px; height: 24px; border-radius: 12px; background: #2c2c2c; font-size: 16px; line-height: 24px; text-align: center; letter-spacing: -.5px; }
.start { width: 35px; height: 35px; margin-top: 17px; }
.search { width: 326px; height: 44px; margin: 12px 0 0 22px; border-radius: 22px; background: #f2f2f2; display: flex; align-items: center; padding-left: 16px; overflow: hidden; color: #5f5f5f; font-size: 19.5px; }
.mag { width: 22px; height: 23px; margin-right: 16px; }
.rock { width: 73px; height: 34px; margin: 8px 0 0 auto; }
.apps { display: flex; margin-left: 5px; }
.app { width: 66px; height: 70px; position: relative; display: flex; justify-content: center; padding-top: 16px; }
.app svg { width: 36px; height: 36px; position: relative; }
.tile { position: absolute; left: 3px; top: 4px; width: 53px; height: 60px; border-radius: 8px; background: #2b2b2b; border: 1px solid #393939; box-shadow: 7px 0 0 -1px #262626; }
.tile.red { width: 60px; background: #472729; border-color: #472729; box-shadow: none; }
.dot { position: absolute; left: 29px; top: 58px; width: 9px; height: 5px; border-radius: 3px; background: #9a9a9a; }
.dot.wide { left: 21px; width: 24px; background: #4cc2ff; }
.dot.pink { background: #ff99a4; }
.badge { position: absolute; left: 35px; top: 9px; width: 24px; height: 24px; border-radius: 12px; text-align: center; line-height: 24px; font-size: 16px; }
.bh { background: #ef6c00; font-size: 13px; font-weight: 600; }
.by { background: #ffc20e; }
.bt { left: 37px; top: 16px; width: 22px; height: 17px; border-radius: 5px; background: #ef3b3b; line-height: 17px; font-size: 14px; letter-spacing: -.9px; }
.bw { background: #4cc2ff; color: #111; letter-spacing: -1px; }
.pre { font: 700 9.5px "Open Sans", sans-serif; }
.my { font: 10px "Open Sans", sans-serif; fill: #fff; }
.hp { font: italic 700 15px "Open Sans", sans-serif; }
.tray { flex: 1; display: flex; height: 70px; align-items: flex-start; font-size: 17px; white-space: nowrap; }
.tray svg { flex: none; }
.chev { width: 16px; height: 10px; margin: 29px 0 0 35px; }
.cloud { width: 25px; height: 28px; margin: 21px 0 0 27px; }
.lang { width: 50px; margin: 11px 0 0 20px; text-align: center; line-height: 23px; letter-spacing: -.3px; }
.lang span, .clock span { display: block; }
.wifi { width: 24px; height: 22px; margin: 23px 0 0 20px; }
.mute { width: 24px; height: 20px; margin: 24px 0 0 11px; }
.batt { width: 25px; height: 22px; margin: 21px 0 0 12px; }
.clock { width: 110px; margin: 9px 0 0 8px; text-align: right; line-height: 24px; letter-spacing: -.2px; }
.date { font-size: 17.6px; letter-spacing: .3px; }
.bell { width: 21px; height: 23px; margin: 22px 0 0 13px; }
```
